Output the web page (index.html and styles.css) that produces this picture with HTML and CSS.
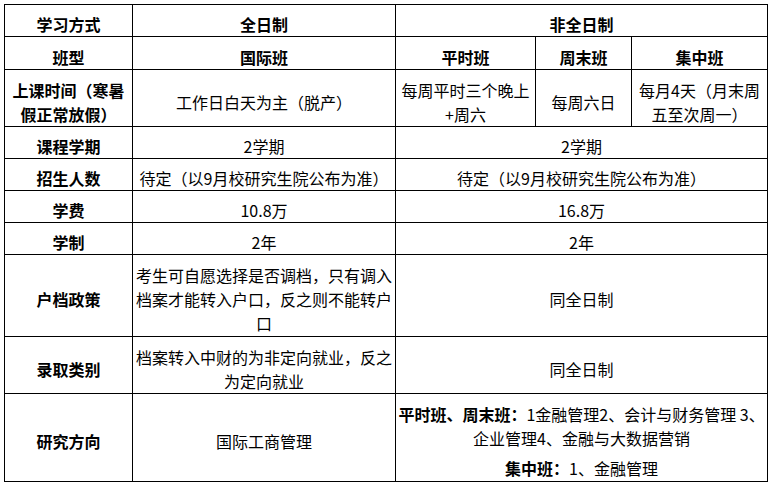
FILE: index.html
```html
<!DOCTYPE html>
<html lang="zh-CN">
<head>
<meta charset="utf-8">
<title>学习方式</title>
<link rel="stylesheet" href="styles.css">
</head>
<body>
<div class="page">
<table class="grid">
  <colgroup>
    <col class="c1"><col class="c2"><col class="c3"><col class="c4"><col class="c5">
  </colgroup>
  <tr class="r31">
    <th>学习方式</th>
    <th>全日制</th>
    <th colspan="3">非全日制</th>
  </tr>
  <tr class="r33">
    <th>班型</th>
    <th>国际班</th>
    <th>平时班</th>
    <th>周末班</th>
    <th>集中班</th>
  </tr>
  <tr class="r57">
    <th>上课时间（寒暑假正常放假）</th>
    <td>工作日白天为主（脱产）</td>
    <td>每周平时三个晚上+周六</td>
    <td>每周六日</td>
    <td>每月4天（月末周五至次周一）</td>
  </tr>
  <tr class="r32">
    <th>课程学期</th>
    <td>2学期</td>
    <td colspan="3">2学期</td>
  </tr>
  <tr class="r32">
    <th>招生人数</th>
    <td>待定（以9月校研究生院公布为准）</td>
    <td colspan="3">待定（以9月校研究生院公布为准）</td>
  </tr>
  <tr class="r32">
    <th>学费</th>
    <td>10.8万</td>
    <td colspan="3">16.8万</td>
  </tr>
  <tr class="r32">
    <th>学制</th>
    <td>2年</td>
    <td colspan="3">2年</td>
  </tr>
  <tr class="r82">
    <th>户档政策</th>
    <td>考生可自愿选择是否调档，只有调入档案才能转入户口，反之则不能转户口</td>
    <td colspan="3">同全日制</td>
  </tr>
  <tr class="r57">
    <th>录取类别</th>
    <td>档案转入中财的为非定向就业，反之为定向就业</td>
    <td colspan="3">同全日制</td>
  </tr>
  <tr class="r88">
    <th>研究方向</th>
    <td>国际工商管理</td>
    <td colspan="3">
      <p class="para"><b>平时班、周末班：</b>1金融管理2、会计与财务管理 3、企业管理4、金融与大数据营销</p>
      <p class="para para-gap"><b>集中班：</b>1、金融管理</p>
    </td>
  </tr>
</table>
</div>
</body>
</html>
```

FILE: styles.css
```css
html, body {
  margin: 0;
  padding: 0;
  background: #ffffff;
}

.page {
  padding: 4px;
}

.grid {
  border-collapse: collapse;
  table-layout: fixed;
  width: 763px;
  font-family: "Noto Sans CJK SC", "Noto Sans", sans-serif;
  font-size: 16px;
  letter-spacing: 0;
  line-height: 24px;
  color: #000000;
}

.c1 { width: 128px; }
.c2 { width: 263px; }
.c3 { width: 140px; }
.c4 { width: 96px; }
.c5 { width: 136px; }

.grid th,
.grid td {
  border: 1px solid #000000;
  padding: 7px 1px 0;
  text-align: center;
  vertical-align: middle;
  font-weight: 400;
}

.grid th {
  font-weight: 700;
}

.r31 { height: 31px; }
.r32 { height: 32px; }
.r33 { height: 33px; }
.r57 { height: 57px; }
.r82 { height: 82px; }
.r88 { height: 88px; }

.para {
  margin: 0;
}

.para b {
  font-weight: 700;
}

.para-gap {
  margin-top: 6px;
}
```
